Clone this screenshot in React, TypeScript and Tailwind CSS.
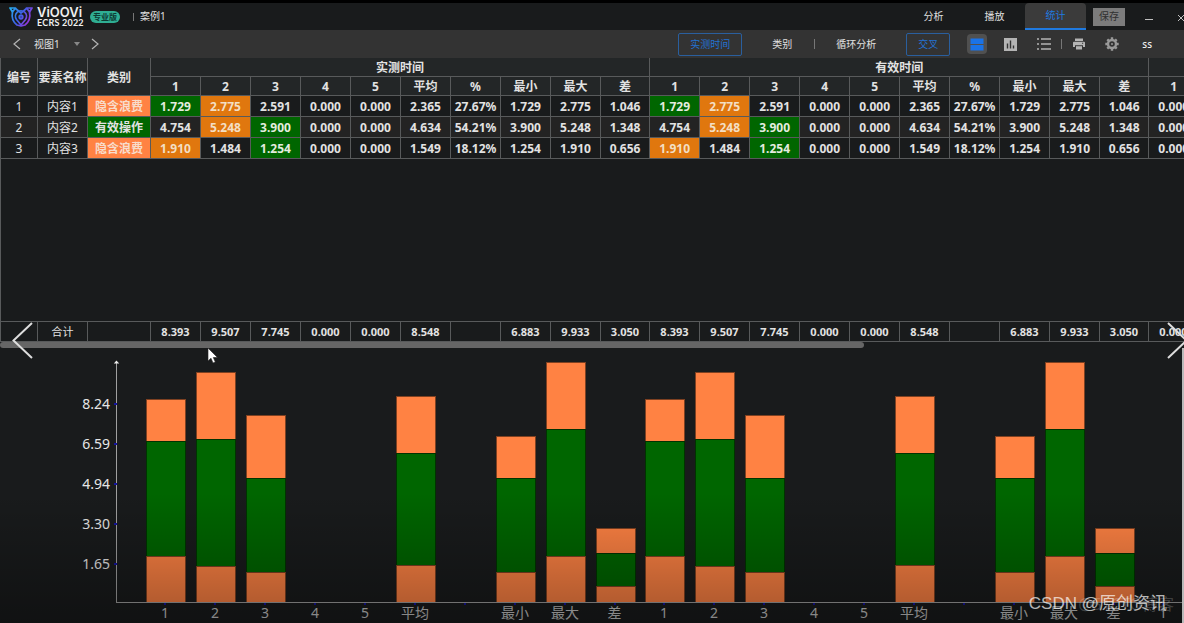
import type { ReactNode } from "react";

type Tone = "good" | "warn" | "waste" | undefined;

const HEADERS = ["1", "2", "3", "4", "5", "平均", "%", "最小", "最大", "差"];
const GROUPS = ["实测时间", "有效时间", "标准时间"];

type Row = { name: string; kind: string; values: string[]; tones: Tone[] };

const ROWS: Row[] = [
  {
    name: "内容1",
    kind: "隐含浪费",
    values: ["1.729", "2.775", "2.591", "0.000", "0.000", "2.365", "27.67%", "1.729", "2.775", "1.046"],
    tones: ["good", "warn"],
  },
  {
    name: "内容2",
    kind: "有效操作",
    values: ["4.754", "5.248", "3.900", "0.000", "0.000", "4.634", "54.21%", "3.900", "5.248", "1.348"],
    tones: [undefined, "warn", "good"],
  },
  {
    name: "内容3",
    kind: "隐含浪费",
    values: ["1.910", "1.484", "1.254", "0.000", "0.000", "1.549", "18.12%", "1.254", "1.910", "0.656"],
    tones: ["warn", undefined, "good"],
  },
];

const TOTALS = ["8.393", "9.507", "7.745", "0.000", "0.000", "8.548", "", "6.883", "9.933", "3.050"];

const TICKS = ["8.24", "6.59", "4.94", "3.30", "1.65"];
const PX_PER_SECOND = 24.2;

function toneClass(tone: Tone) {
  if (tone === "good") return "bg-[#006600] text-[#e4ecdf]";
  if (tone === "warn") return "bg-[#e0770e] text-[#f3dfc4]";
  return "";
}

function Columns() {
  return (
    <colgroup>
      <col className="w-[37px]" />
      <col className="w-[50px]" />
      <col className="w-[63px]" />
      {GROUPS.map((g) =>
        HEADERS.map((h) => <col key={g + h} className={h === "差" ? "w-[49px]" : "w-[50px]"} />),
      )}
    </colgroup>
  );
}

const CELL = "overflow-hidden whitespace-nowrap border-r border-b border-[#585a5b] p-0 pt-px text-center";
const HEAD = "overflow-hidden whitespace-nowrap border-r border-b border-[#585a5b] p-0 pt-0.5 text-center text-xs font-bold";

function DataTable() {
  return (
    <table className="w-[1647px] table-fixed border-separate border-spacing-0 text-[#e2e2e2]">
      <Columns />
      <thead className="bg-[#232627]">
        <tr className="h-[19px]">
          <th rowSpan={2} className={HEAD}>编号</th>
          <th rowSpan={2} className={HEAD}>要素名称</th>
          <th rowSpan={2} className={HEAD}>类别</th>
          {GROUPS.map((g) => (
            <th key={g} colSpan={10} className={HEAD}>{g}</th>
          ))}
        </tr>
        <tr className="h-[19px]">
          {GROUPS.map((g) => HEADERS.map((h) => <th key={g + h} className={HEAD}>{h}</th>))}
        </tr>
      </thead>
      <tbody>
        {ROWS.map((row, i) => (
          <tr key={row.name} className="h-[21px] even:bg-[#232323]">
            <td className={`${CELL} text-xs`}>{i + 1}</td>
            <td className={`${CELL} text-xs`}>{row.name}</td>
            <td
              className={`${CELL} text-xs font-bold ${
                row.kind === "有效操作" ? "bg-[#006600]" : "bg-[#ff8243] text-[#f8dccb]"
              }`}
            >
              {row.kind}
            </td>
            {GROUPS.map((g, gi) =>
              row.values.map((v, vi) => (
                <td
                  key={g + vi}
                  className={`${CELL} text-xs font-bold ${gi < 2 ? toneClass(row.tones[vi]) : ""}`}
                >
                  {gi < 2 ? v : "0.000"}
                </td>
              )),
            )}
          </tr>
        ))}
      </tbody>
    </table>
  );
}

function TotalsTable() {
  return (
    <table className="w-[1647px] table-fixed border-separate border-spacing-0 text-[#e2e2e2]">
      <Columns />
      <tbody>
        <tr className="h-[21px]">
          <td className={`${CELL} border-t`} />
          <td className={`${CELL} border-t text-[11px]`}>合计</td>
          <td className={`${CELL} border-t`} />
          {GROUPS.map((g, gi) =>
            TOTALS.map((v, vi) => (
              <td key={g + vi} className={`${CELL} border-t text-[11px] font-bold`}>
                {gi < 2 || v === "" ? v : "0.000"}
              </td>
            )),
          )}
        </tr>
      </tbody>
    </table>
  );
}

function Bar({ index }: { index: number }) {
  if (HEADERS[index] === "%") return null;
  return (
    <div className="flex w-10 flex-col">
      {ROWS.map((row) => {
        const value = parseFloat(row.values[index]);
        if (value === 0) return null;
        return (
          <div
            key={row.name}
            className={`border border-b-0 border-black/50 ${row.kind === "有效操作" ? "bg-[#006600]" : "bg-[#ff8243]"}`}
            style={{ height: Math.round(value * PX_PER_SECOND) }}
          />
        );
      })}
    </div>
  );
}

function Chart() {
  return (
    <section aria-label="统计图" className="relative flex flex-1 overflow-hidden border-r-2 border-[#b9b9b9] pt-[14px]">
      <div className="flex w-[116px] shrink-0 flex-col pt-[22px] pr-[6px] text-right text-sm text-[#e6e6e6]">
        {TICKS.map((t) => (
          <div key={t} className="h-10 leading-10">{t}</div>
        ))}
      </div>
      <div className="flex min-w-0 flex-1 flex-col">
        <div className="relative flex h-[241px] items-end border-b border-l border-[#a0a0a0]">
          <svg className="absolute -top-1 -left-1 h-2 w-2" viewBox="0 0 8 8" aria-hidden="true">
            <path d="M0.8 5.5 3.5 2.5 6.2 5.5Z" fill="#eee" />
          </svg>
          <div className="absolute top-[41px] -left-[3px] flex flex-col gap-[38px]">
            {TICKS.map((t) => (
              <i key={t} className="block h-0.5 w-[3px] bg-[#1414a0]" />
            ))}
          </div>
          <div className="flex h-full shrink-0 pl-6">
            {[0, 1].map((g) =>
              HEADERS.map((h, i) => (
                <div key={g + h} className={`flex shrink-0 items-end justify-center ${h === "差" ? "w-[49px]" : "w-[50px]"}`}>
                  <Bar index={i} />
                </div>
              )),
            )}
          </div>
        </div>
        <div className="flex pl-6 text-sm leading-4 text-[#c9c9c9]">
          {[0, 1, 2].map((g) =>
            HEADERS.map((h) => (
              <div
                key={g + h}
                className={`flex shrink-0 flex-col items-center ${h === "差" ? "w-[49px]" : "w-[50px]"}`}
              >
                <i className="block h-0.5 w-0.5 bg-[#1414a0]" />
                <span>{h === "%" ? "" : h}</span>
              </div>
            )),
          )}
        </div>
      </div>
      <div className="pointer-events-none absolute inset-x-0 bottom-0 h-[130px] bg-linear-to-b from-transparent to-black/35" />
    </section>
  );
}

function Logo() {
  return (
    <svg className="h-5 w-6" viewBox="0 0 24 20" fill="none" strokeWidth="1.7" strokeLinejoin="round" aria-hidden="true">
      <defs>
        <linearGradient id="mark" x1="0" y1="0" x2="24" y2="14" gradientUnits="userSpaceOnUse">
          <stop stopColor="#25b7ee" />
          <stop offset="0.5" stopColor="#3d62e8" />
          <stop offset="1" stopColor="#b02ad8" />
        </linearGradient>
      </defs>
      <g stroke="url(#mark)">
        <path d="M1 1H6.5L3.5 5ZM23 1H17.5L20.5 5Z" />
        <path d="M3.5 5C2.5 10 4 15 8 18L12 19L16 18C20 15 21.500 10 20.5 5" />
        <path d="M6.5 1.500 12 6 17.500 1.500" />
        <path d="M12 18 7.500 12.500A5.500 5.500 0 1 1 16.500 12.500Z" />
        <circle cx="12" cy="10" r="1.8" fill="#3340a8" />
      </g>
    </svg>
  );
}

function IconButton({ label, active, children }: { label: string; active?: boolean; children: ReactNode }) {
  return (
    <button
      type="button"
      aria-label={label}
      className={`flex h-5 w-5 items-center justify-center rounded-sm text-[#b4b4b4] ${active ? "bg-[#505050]" : ""}`}
    >
      {children}
    </button>
  );
}

function TitleBar() {
  return (
    <header className="flex h-[30px] items-stretch overflow-hidden border-t-[3px] border-black bg-[#191b1c] pl-[9px] text-[10px] text-[#e0e0e0]">
      <div className="flex items-center">
        <Logo />
        <div className="ml-1 w-[50px] whitespace-nowrap text-[#f0f0f0]">
          <div className="font-['Inter'] text-[13px] leading-[11px] font-semibold">ViOOVi</div>
          <div className="font-['Lato'] text-[9px] leading-[9px] font-bold tracking-wide">ECRS 2022</div>
        </div>
        <span className="ml-[3px] w-[30px] rounded-full bg-[#2fae93] text-center text-[8px] leading-3 font-bold text-[#0d3b33]">专业版</span>
        <span className="ml-[13px] h-2 w-px bg-[#777]" />
        <span className="ml-[6px]">案例1</span>
      </div>
      <nav className="ml-auto flex shrink-0 items-stretch">
        <button type="button" className="w-[61px]">分析</button>
        <button type="button" className="w-[61px]">播放</button>
        <button type="button" className="w-[61px] rounded-t-[4px] border-b-2 border-[#1f7ae0] bg-[#3b3b3b] text-[#1f7ae0]">统计</button>
        <button type="button" className="ml-[7px] h-[18px] w-8 self-center bg-[#7c7c7c] text-[#303030]">保存</button>
        <button type="button" aria-label="最小化" className="ml-5 flex items-center text-[#c0c0c0]">
          <svg width="8" height="12" viewBox="0 0 8 12" stroke="currentColor"><path d="M0 8.5H8" /></svg>
        </button>
        <button type="button" aria-label="关闭" className="ml-[25px] flex items-center text-[#c0c0c0]">
          <svg width="6" height="12" viewBox="0 0 6 12" stroke="currentColor"><path d="M0 4 6 10M6 4 0 10" /></svg>
        </button>
      </nav>
    </header>
  );
}

function ToolBar() {
  return (
    <div className="flex h-7 items-center bg-[#333333] text-[10px] text-[#e0e0e0]">
      <button type="button" aria-label="上一个视图" className="ml-[13px] text-[#b4b4b4]">
        <svg width="8" height="12" viewBox="0 0 8 12" fill="none" stroke="currentColor" strokeWidth="1.2"><path d="M7 1 1 6 7 11" /></svg>
      </button>
      <button type="button" className="ml-[13px] flex items-center">
        视图1
        <svg className="ml-[14px]" width="6" height="4" viewBox="0 0 6 4" fill="#888" aria-hidden="true"><path d="M0 0H6L3 4Z" /></svg>
      </button>
      <button type="button" aria-label="下一个视图" className="ml-[11px] text-[#b4b4b4]">
        <svg width="8" height="12" viewBox="0 0 8 12" fill="none" stroke="currentColor" strokeWidth="1.2"><path d="M1 1 7 6 1 11" /></svg>
      </button>
      <div className="ml-auto flex shrink-0 items-center">
        <button type="button" className="h-[23px] w-16 rounded-xs border border-[#2a5f9e] text-[#2372d2]">实测时间</button>
        <button type="button" className="ml-[30px]">类别</button>
        <span className="ml-[22px] h-[10px] w-px bg-[#777]" />
        <button type="button" className="ml-[21px]">循环分析</button>
        <button type="button" className="ml-[30px] h-[23px] w-11 rounded-xs border border-[#2a5f9e] text-[#2372d2]">交叉</button>
        <div className="ml-[17px] flex items-center">
          <IconButton label="上下布局" active>
            <svg width="14" height="13" viewBox="0 0 14 13" fill="#1a73e8"><path d="M0.5 0.5H13.5V6H0.5ZM0.5 7H13.5V12.5H0.5Z" /></svg>
          </IconButton>
          <span className="w-[13px]" />
          <IconButton label="图表">
            <svg width="13" height="13" viewBox="0 0 13 13"><path d="M0 0H13V13H0Z" fill="currentColor" /><path d="M3.5 5.5V10.5M6.5 2.5V10.5M9.5 7.5V10.5" stroke="#333" strokeWidth="1.4" /></svg>
          </IconButton>
          <span className="w-[14px]" />
          <IconButton label="列表">
            <svg width="14" height="12" viewBox="0 0 14 12" stroke="currentColor" strokeWidth="1.6"><path d="M0 1H2M4 1H14M0 6H2M4 6H14M0 11H2M4 11H14" /></svg>
          </IconButton>
          <span className="ml-[7px] h-[10px] w-px bg-[#777]" />
          <span className="w-[7px]" />
          <IconButton label="打印">
            <svg width="12" height="12" viewBox="0 0 12 12" fill="currentColor"><path d="M2 0.5H10V3H2Z" /><path fillRule="evenodd" d="M1 3.700H11Q12 3.700 12 4.700V9H10V7.200H2V9H0V4.700Q0 3.700 1 3.700ZM9 4.800V5.800H10.200V4.800Z" /><path d="M3 8.200H9V11.500H3Z" /></svg>
          </IconButton>
          <span className="w-[13px]" />
          <IconButton label="设置">
            <svg width="14" height="14" viewBox="0 0 14 14" fill="none" stroke="#999"><circle cx="7" cy="7" r="4" strokeWidth="2.4" /><path d="M7 0.300V2.500M7 11.500V13.700M0.300 7H2.500M11.500 7H13.700M2.300 2.300 3.800 3.800M10.200 10.200 11.700 11.700M11.700 2.300 10.200 3.800M3.800 10.200 2.300 11.700" strokeWidth="2.400" /><circle cx="7" cy="7" r="1" fill="#999" stroke="none" /></svg>
          </IconButton>
          <button type="button" className="mr-8 ml-5 font-medium text-[#f0f0f0]">ss</button>
        </div>
      </div>
    </div>
  );
}

export default function App() {
  return (
    <div className="relative flex min-h-screen flex-col overflow-hidden bg-[#191b1c] font-['Noto_Sans','Noto_Sans_CJK_SC',sans-serif]">
      <TitleBar />
      <ToolBar />
      <main className="relative flex flex-1 flex-col">
        <div className="h-[263px] overflow-hidden border-l border-[#585a5b]">
          <DataTable />
        </div>
        <div className="overflow-hidden border-l border-[#585a5b]">
          <TotalsTable />
        </div>
        <div className="h-[6px]">
          <div className="h-full w-[73%] rounded-full bg-[#666666]" />
        </div>
        <Chart />
        <button type="button" aria-label="上一张" className="absolute top-[264px] left-3">
          <svg width="21" height="37" viewBox="0 0 21 37" fill="none" stroke="#dddddd" strokeWidth="2"><path d="M20 1 1.500 18.500 20 36" /></svg>
        </button>
        <button type="button" aria-label="下一张" className="absolute top-[264px] -right-1">
          <svg width="21" height="37" viewBox="0 0 21 37" fill="none" stroke="#dddddd" strokeWidth="2"><path d="M1 1 19.500 18.500 1 36" /></svg>
        </button>
        <svg className="absolute top-[289px] left-[207px]" width="12" height="18" viewBox="0 0 12 18" aria-hidden="true">
          <path d="M1 1V14L4 11.2 6 16 8.3 15 6.3 10.5H10.5Z" fill="#fff" stroke="#222" strokeWidth="0.6" />
        </svg>
      </main>
      <div className="absolute right-[10px] bottom-[7px] text-base leading-6 whitespace-nowrap text-white/20">@51CTO博客</div>
      <div className="absolute right-[17px] bottom-[7px] font-['Liberation_Sans','Noto_Sans_CJK_SC',sans-serif] text-[17px] leading-6 whitespace-nowrap text-white/70">
        CSDN @原创资讯
      </div>
    </div>
  );
}
